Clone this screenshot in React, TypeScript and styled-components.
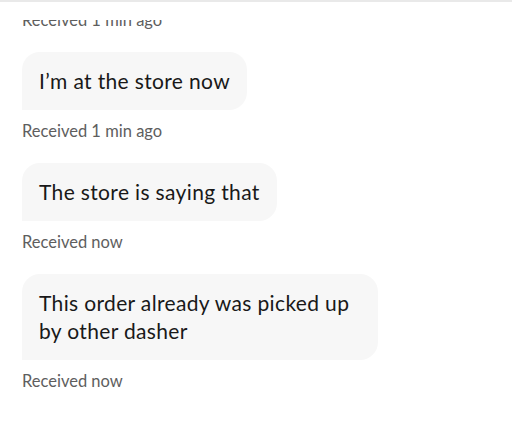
import React from "react";
import styled, { createGlobalStyle } from "styled-components";

const GlobalStyle = createGlobalStyle`
  html, body {
    margin: 0;
    padding: 0;
    background: #ffffff;
  }
  body {
    font-family: Lato, "Noto Sans", sans-serif;
    -webkit-font-smoothing: antialiased;
  }
`;

const Screen = styled.div`
  width: 512px;
  height: 427px;
  display: flex;
  flex-direction: column;
  background: #ffffff;
  border-top: 2px solid #e9e9e9;
  box-sizing: border-box;
  overflow: hidden;
`;

const Header = styled.div`
  height: 18px;
  flex: none;
  background: #ffffff;
`;

const Thread = styled.div`
  flex: 1;
  overflow: hidden;
`;

const List = styled.div`
  display: flex;
  flex-direction: column;
  align-items: flex-start;
  padding: 0 22px;
  margin-top: -10px;
`;

const Bubble = styled.div`
  max-width: 356px;
  box-sizing: border-box;
  padding: 15px 17px;
  background: #f7f7f7;
  border-radius: 18px 18px 18px 0;
  color: #191919;
  font-size: 21px;
  line-height: 28px;
  letter-spacing: 0.35px;
`;

const Stamp = styled.div<{ $first?: boolean }>`
  margin: ${(p) => (p.$first ? "0" : "11px")} 0 22px;
  color: #5e5e5e;
  font-size: 16.5px;
  line-height: 20px;
`;

const messages = [
  { text: "I\u2019m at the store now", time: "Received 1 min ago" },
  { text: "The store is saying that", time: "Received now" },
  { text: "This order already was picked up by other dasher", time: "Received now" },
];

const App: React.FC = () => {
  return (
    <>
      <GlobalStyle />
      <Screen>
        <Header />
        <Thread>
          <List>
            <Stamp $first>Received 1 min ago</Stamp>
            {messages.map((m, i) => (
              <React.Fragment key={i}>
                <Bubble>{m.text}</Bubble>
                <Stamp>{m.time}</Stamp>
              </React.Fragment>
            ))}
          </List>
        </Thread>
      </Screen>
    </>
  );
};

export default App;
